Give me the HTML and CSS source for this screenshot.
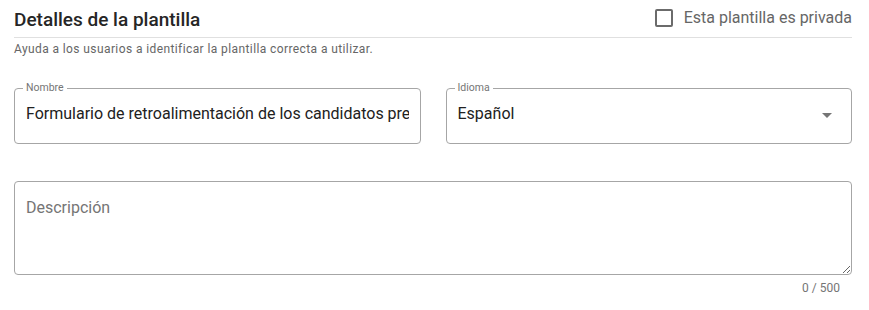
FILE: index.html
```html
<!DOCTYPE html>
<html lang="es">
<head>
<meta charset="utf-8">
<title>Detalles de la plantilla</title>
<link rel="stylesheet" href="styles.css">
</head>
<body>
<div class="page">
  <div class="header">
    <h2 class="title">Detalles de la plantilla</h2>
    <label class="private">
      <span class="checkbox"></span>
      <span class="private-text">Esta plantilla es privada</span>
    </label>
  </div>
  <p class="subtitle">Ayuda a los usuarios a identificar la plantilla correcta a utilizar.</p>

  <div class="row">
    <div class="field">
      <span class="field-label">Nombre</span>
      <input class="field-input" type="text" value="Formulario de retroalimentación de los candidatos preseleccionados" aria-label="Nombre">
    </div>
    <div class="field field-select">
      <span class="field-label">Idioma</span>
      <div class="field-value">Español</div>
      <span class="arrow"></span>
    </div>
  </div>

  <div class="desc">
    <textarea class="textarea" placeholder="Descripción"></textarea>
    <div class="counter">0 / 500</div>
  </div>
</div>
</body>
</html>
```
FILE: styles.css
```css
html, body {
  margin: 0;
  padding: 0;
  background: #ffffff;
}

body {
  font-family: Roboto, "Noto Sans", "Liberation Sans", sans-serif;
  color: #212121;
}

.page {
  padding: 0 17px 0 14px;
}

.header {
  display: flex;
  justify-content: space-between;
  align-items: flex-start;
  height: 37px;
  border-bottom: 1px solid #e0e0e0;
}

.title {
  margin: 8px 0 0;
  font-size: 19px;
  font-weight: 500;
  line-height: 24px;
  color: #262626;
}

.private {
  display: flex;
  align-items: center;
  gap: 11px;
  margin-top: 8px;
  height: 20px;
}

.checkbox {
  width: 18px;
  height: 18px;
  box-sizing: border-box;
  border: 2px solid #6b6b6b;
  border-radius: 2px;
}

.private-text {
  font-size: 16px;
  line-height: 20px;
  color: #666666;
}

.subtitle {
  margin: 3px 0 0;
  font-size: 12px;
  line-height: 16px;
  letter-spacing: 0.4px;
  color: #666666;
}

.row {
  display: grid;
  grid-template-columns: minmax(0, 1fr) minmax(0, 1fr);
  gap: 25px;
  margin-top: 31px;
}

.field {
  position: relative;
  display: flex;
  align-items: flex-start;
  height: 56px;
  box-sizing: border-box;
  border: 1px solid #a6a6a6;
  border-radius: 4px;
  padding: 15px 11px 0;
}

.field-label {
  position: absolute;
  top: -7px;
  left: 8px;
  padding: 0 3px;
  background: #ffffff;
  font-size: 10.5px;
  line-height: 12px;
  color: #757575;
}

.field-input {
  flex: 1;
  min-width: 0;
  width: 100%;
  height: 20px;
  margin: 0;
  padding: 0;
  border: 0;
  outline: none;
  background: transparent;
  font-family: Roboto, "Noto Sans", "Liberation Sans", sans-serif;
  font-size: 16px;
  line-height: 20px;
  color: #212121;
}

.field-value {
  flex: 1;
  min-width: 0;
  font-size: 16px;
  line-height: 20px;
  color: #212121;
  white-space: nowrap;
}

.arrow {
  flex: none;
  width: 0;
  height: 0;
  margin: 9px 8px 0 0;
  border-left: 5px solid transparent;
  border-right: 5px solid transparent;
  border-top: 5px solid #757575;
}

.desc {
  margin-top: 37px;
}

.textarea {
  display: block;
  width: 100%;
  height: 94px;
  box-sizing: border-box;
  margin: 0;
  border: 1px solid #a6a6a6;
  border-radius: 4px;
  padding: 16px 11px;
  font-family: Roboto, "Noto Sans", "Liberation Sans", sans-serif;
  font-size: 16px;
  line-height: 20px;
  color: #212121;
  resize: vertical;
  outline: none;
}

.textarea::placeholder {
  color: #757575;
  opacity: 1;
}

.counter {
  margin-top: 5px;
  padding-right: 12px;
  text-align: right;
  font-size: 12px;
  line-height: 16px;
  color: #757575;
}
```
